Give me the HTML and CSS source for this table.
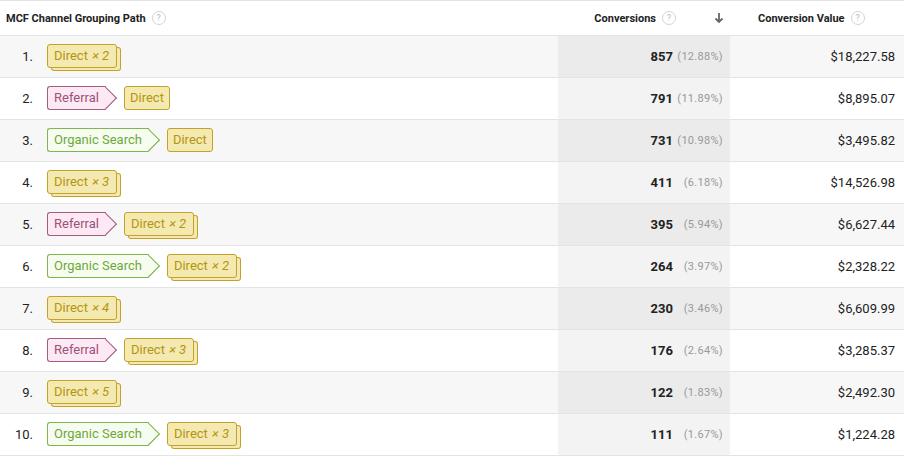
FILE: index.html
```html
<!DOCTYPE html>
<html>
<head>
<meta charset="utf-8">
<link rel="stylesheet" href="styles.css">
</head>
<body>
<div class="table">
  <div class="head">
    <div class="h-path">MCF Channel Grouping Path <span class="help">?</span></div>
    <div class="h-conv">Conversions <span class="help">?</span>
      <svg class="sort" width="10" height="12" viewBox="0 0 10 12"><path d="M5 1V10M1.5 6.5L5 10L8.5 6.5" fill="none" stroke="#666" stroke-width="1.8"/></svg>
    </div>
    <div class="h-val">Conversion Value <span class="help">?</span></div>
  </div>

  <div class="row alt">
    <div class="rank">1.</div>
    <div class="path"><span class="tag direct stack">Direct <em>× 2</em></span></div>
    <div class="conv"><b>857</b><span class="pct">(12.88%)</span></div>
    <div class="val">$18,227.58</div>
  </div>
  <div class="row">
    <div class="rank">2.</div>
    <div class="path"><span class="tag referral arrow">Referral</span><span class="tag direct">Direct</span></div>
    <div class="conv"><b>791</b><span class="pct">(11.89%)</span></div>
    <div class="val">$8,895.07</div>
  </div>
  <div class="row alt">
    <div class="rank">3.</div>
    <div class="path"><span class="tag organic arrow">Organic Search</span><span class="tag direct">Direct</span></div>
    <div class="conv"><b>731</b><span class="pct">(10.98%)</span></div>
    <div class="val">$3,495.82</div>
  </div>
  <div class="row">
    <div class="rank">4.</div>
    <div class="path"><span class="tag direct stack">Direct <em>× 3</em></span></div>
    <div class="conv"><b>411</b><span class="pct">(6.18%)</span></div>
    <div class="val">$14,526.98</div>
  </div>
  <div class="row alt">
    <div class="rank">5.</div>
    <div class="path"><span class="tag referral arrow">Referral</span><span class="tag direct stack">Direct <em>× 2</em></span></div>
    <div class="conv"><b>395</b><span class="pct">(5.94%)</span></div>
    <div class="val">$6,627.44</div>
  </div>
  <div class="row">
    <div class="rank">6.</div>
    <div class="path"><span class="tag organic arrow">Organic Search</span><span class="tag direct stack">Direct <em>× 2</em></span></div>
    <div class="conv"><b>264</b><span class="pct">(3.97%)</span></div>
    <div class="val">$2,328.22</div>
  </div>
  <div class="row alt">
    <div class="rank">7.</div>
    <div class="path"><span class="tag direct stack">Direct <em>× 4</em></span></div>
    <div class="conv"><b>230</b><span class="pct">(3.46%)</span></div>
    <div class="val">$6,609.99</div>
  </div>
  <div class="row">
    <div class="rank">8.</div>
    <div class="path"><span class="tag referral arrow">Referral</span><span class="tag direct stack">Direct <em>× 3</em></span></div>
    <div class="conv"><b>176</b><span class="pct">(2.64%)</span></div>
    <div class="val">$3,285.37</div>
  </div>
  <div class="row alt">
    <div class="rank">9.</div>
    <div class="path"><span class="tag direct stack">Direct <em>× 5</em></span></div>
    <div class="conv"><b>122</b><span class="pct">(1.83%)</span></div>
    <div class="val">$2,492.30</div>
  </div>
  <div class="row">
    <div class="rank">10.</div>
    <div class="path"><span class="tag organic arrow">Organic Search</span><span class="tag direct stack">Direct <em>× 3</em></span></div>
    <div class="conv"><b>111</b><span class="pct">(1.67%)</span></div>
    <div class="val">$1,224.28</div>
  </div>
</div>
</body>
</html>
```

FILE: styles.css
```css
html, body {
  margin: 0;
  padding: 0;
  background: #fff;
}
body {
  font-family: Roboto, "Liberation Sans", sans-serif;
  font-size: 13px;
  color: #222;
}
.table {
  width: 904px;
  border-top: 1px solid #e4e4e4;
}
.head {
  display: grid;
  grid-template-columns: 558px 172px 174px;
  height: 34px;
  border-bottom: 1px solid #e4e4e4;
  font-size: 11px;
  font-weight: 700;
  color: #222;
}
.head > div {
  display: flex;
  align-items: center;
}
.h-path {
  padding-left: 6px;
}
.h-conv {
  justify-content: flex-end;
  padding-right: 6px;
}
.h-val {
  padding-left: 28px;
}
.help {
  display: inline-flex;
  align-items: center;
  justify-content: center;
  box-sizing: border-box;
  width: 14px;
  height: 14px;
  margin-left: 6px;
  border: 1px solid #d4d4d4;
  border-radius: 50%;
  font-size: 9px;
  font-weight: 400;
  color: #bbb;
}
.sort {
  margin-left: 38px;
}
.row {
  display: grid;
  grid-template-columns: 36px 522px 172px 174px;
  height: 41px;
  border-bottom: 1px solid #e4e4e4;
  background: #fff;
}
.row.alt {
  background: #f7f7f7;
}
.row > div {
  display: flex;
  align-items: center;
}
.rank {
  justify-content: flex-end;
  padding-right: 3px;
}
.path {
  padding-left: 11px;
  gap: 7px;
  padding-bottom: 1px;
}
.conv {
  justify-content: flex-end;
  padding-right: 7px;
  background: #f3f3f3;
}
.row.alt .conv {
  background: #ebebeb;
}
.conv b {
  font-weight: 700;
}
.pct {
  width: 50px;
  text-align: right;
  font-size: 11px;
  letter-spacing: 0.3px;
  color: #999;
}
.val {
  justify-content: flex-end;
  padding-right: 9px;
}
.tag {
  position: relative;
  z-index: 0;
  display: inline-block;
  height: 22px;
  line-height: 22px;
  padding: 0 6px;
  border: 1px solid;
  border-radius: 3px;
  white-space: nowrap;
}
.tag em {
  font-style: italic;
  margin-left: 1px;
}
.direct {
  background: #f5e9b2;
  border-color: #c4a22a;
  color: #b4950f;
  padding: 0 5px;
}
.direct.stack {
  padding: 0 7px 0 6px;
  margin-right: 4px;
  box-shadow: 4px 3px 0 -1px #f5e9b2, 4px 3px 0 0 #c4a22a;
}
.referral {
  background: #fde9f3;
  border-color: #a65c82;
  color: #9c5279;
}
.organic {
  background: #f7fcf0;
  border-color: #80b64c;
  color: #6ea83c;
}
.arrow {
  border-right: none;
  border-radius: 3px 0 0 3px;
  margin-right: 11px;
  padding-right: 7px;
}
.arrow::after {
  content: "";
  position: absolute;
  z-index: -1;
  top: 3px;
  right: -8px;
  width: 15.5px;
  height: 15.5px;
  box-sizing: border-box;
  background: inherit;
  border-top: 1px solid;
  border-right: 1px solid;
  border-color: inherit;
  transform: rotate(45deg);
}
```
